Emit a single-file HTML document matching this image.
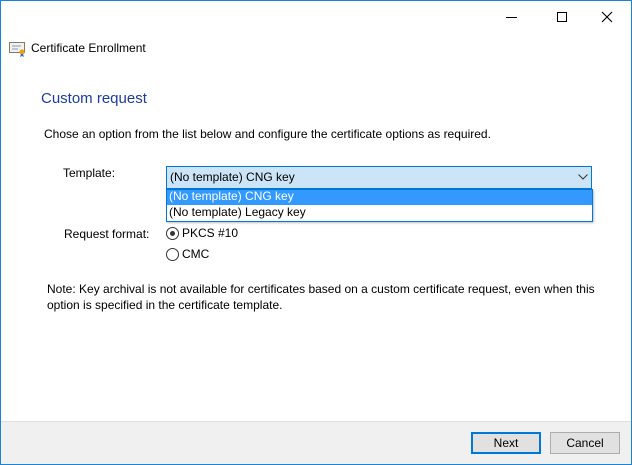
<!DOCTYPE html>
<html><head><meta charset="utf-8"><style>
*{margin:0;padding:0;box-sizing:border-box}
body{width:632px;height:465px;overflow:hidden;background:#fff;font-family:"Liberation Sans",sans-serif;font-size:12px;color:#000;position:relative}
.win{position:absolute;left:0;top:0;width:632px;height:465px;border:1px solid #1883d7;background:#fff}
.abs{position:absolute;white-space:nowrap}
</style></head><body>
<div class="win">
  <div class="abs" style="left:505px;top:16px;width:11px;height:1px;background:#000"></div>
  <div class="abs" style="left:556px;top:11px;width:10px;height:10px;border:1px solid #000"></div>
  <svg class="abs" style="left:600px;top:10px" width="12" height="12"><path d="M1 1L11 11M11 1L1 11" stroke="#000" stroke-width="1.1"/></svg>
  <svg class="abs" style="left:8px;top:40px" width="18" height="16"><rect x="0.5" y="1.5" width="15" height="10" fill="#f4f1ea" stroke="#8a7a60"/><line x1="3" y1="5" x2="12" y2="5" stroke="#7a9ad0"/><line x1="3" y1="8" x2="9" y2="8" stroke="#7a9ad0"/><circle cx="13" cy="11" r="2.6" fill="#e8a020"/><path d="M12 13l-1 3 2-1 2 1-1-3" fill="#3a6ac0"/></svg>
  <div class="abs" style="left:30px;top:40px;font-size:12px">Certificate Enrollment</div>
  <div class="abs" style="left:40px;top:89px;font-size:15px;color:#1e3b9e">Custom request</div>
  <div class="abs" style="left:43px;top:126px">Chose an option from the list below and configure the certificate options as required.</div>
  <div class="abs" style="left:62px;top:165px">Template:</div>
  <div class="abs" style="left:165px;top:165px;width:426px;height:23px;background:#cce4f7;border:1px solid #0078d7"></div>
  <div class="abs" style="left:169px;top:169px">(No template) CNG key</div>
  <svg class="abs" style="left:577px;top:173px" width="10" height="6"><path d="M0.5 0.5L5 5L9.5 0.5" stroke="#333" fill="none"/></svg>
  <div class="abs" style="left:165px;top:188px;width:427px;height:33px;border:1px solid #0078d7;background:#fff;box-shadow:1px 1px 2px rgba(0,0,0,.25)"></div>
  <div class="abs" style="left:166px;top:189px;width:425px;height:15px;background:#3399ff"></div>
  <div class="abs" style="left:168px;top:188px;color:#fff">(No template) CNG key</div>
  <div class="abs" style="left:168px;top:204px">(No template) Legacy key</div>
  <div class="abs" style="left:63px;top:226px">Request format:</div>
  <div class="abs" style="left:165px;top:226px;width:13px;height:13px;border:1px solid #333;border-radius:50%"></div>
  <div class="abs" style="left:169px;top:230px;width:5px;height:5px;background:#333;border-radius:50%"></div>
  <div class="abs" style="left:181px;top:225px">PKCS #10</div>
  <div class="abs" style="left:165px;top:247px;width:13px;height:13px;border:1px solid #333;border-radius:50%"></div>
  <div class="abs" style="left:181px;top:246px">CMC</div>
  <div class="abs" style="left:46px;top:280px;line-height:16px">Note: Key archival is not available for certificates based on a custom certificate request, even when this<br>option is specified in the certificate template.</div>
  <div class="abs" style="left:0;top:420px;width:630px;height:43px;background:#f0f0f0;border-top:1px solid #dfdfdf"></div>
  <div class="abs" style="left:470px;top:431px;width:70px;height:22px;background:#e1e1e1;border:2px solid #0078d7;text-align:center;line-height:18px">Next</div>
  <div class="abs" style="left:549px;top:431px;width:70px;height:22px;background:#e1e1e1;border:1px solid #adadad;text-align:center;line-height:20px">Cancel</div>
</div>
</body></html>
